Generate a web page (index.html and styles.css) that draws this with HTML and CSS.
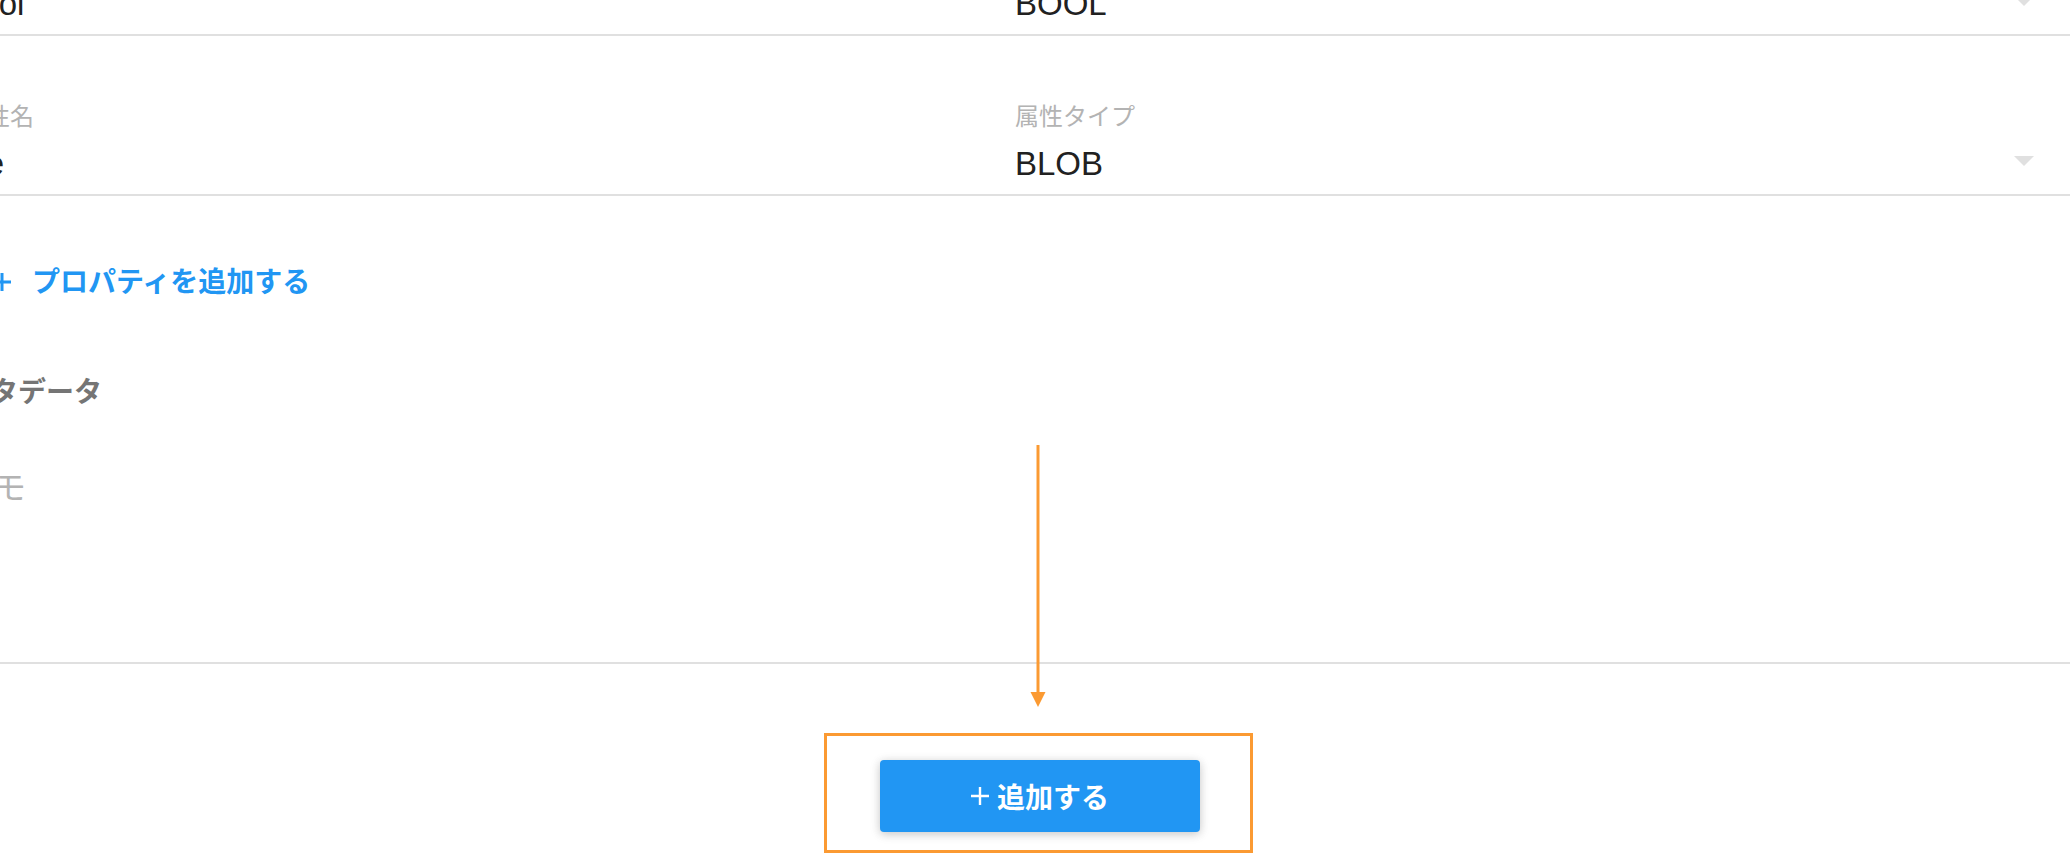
FILE: index.html
```html
<!DOCTYPE html>
<html lang="ja">
<head>
<meta charset="utf-8">
<title>プロパティ編集</title>
<link rel="stylesheet" href="styles.css">
</head>
<body>
<div class="page">
  <div class="form">
    <div class="prop-row">
      <div class="field">
        <div class="field-label">属性名</div>
        <div class="field-value">bool</div>
      </div>
      <div class="field">
        <div class="field-label">属性タイプ</div>
        <div class="field-value">
          <span>BOOL</span>
          <svg class="caret" width="20" height="10" viewBox="0 0 20 10"><path d="M0 0h20L10 10z"/></svg>
        </div>
      </div>
    </div>
    <div class="prop-row">
      <div class="field">
        <div class="field-label">属性名</div>
        <div class="field-value">file</div>
      </div>
      <div class="field">
        <div class="field-label">属性タイプ</div>
        <div class="field-value">
          <span>BLOB</span>
          <svg class="caret" width="20" height="10" viewBox="0 0 20 10"><path d="M0 0h20L10 10z"/></svg>
        </div>
      </div>
    </div>
    <button class="add-prop" type="button">
      <svg class="add-prop-icon" width="20" height="20" viewBox="0 0 20 20"><path d="M10 1v18M1 10h18"/></svg>
      <span class="add-prop-text">プロパティを追加する</span>
    </button>
    <h3 class="section-title">メタデータ</h3>
    <div class="memo">
      <div class="memo-label">メモ</div>
    </div>
  </div>
  <div class="actions">
    <button class="submit" type="button">
      <svg class="submit-icon" width="18" height="18" viewBox="0 0 18 18"><path d="M9 0v18M0 9h18"/></svg>
      <span>追加する</span>
    </button>
  </div>
  <svg class="annot-arrow" width="16" height="262" viewBox="0 0 16 262">
    <path class="annot-line" d="M8 0V248"/>
    <path class="annot-head" d="M0.5 247H15.5L8 262z"/>
  </svg>
  <div class="annot-box"></div>
</div>
</body>
</html>
```

FILE: styles.css
```css
html, body {
  margin: 0;
  padding: 0;
  background: #ffffff;
}

body {
  font-family: "Liberation Sans", "Noto Sans CJK JP", sans-serif;
  overflow: hidden;
}

.page {
  position: relative;
  width: 2070px;
  height: 864px;
  overflow: hidden;
}

.form {
  margin-top: -124px;
  margin-left: -38px;
  width: 2108px;
}

.prop-row {
  display: grid;
  grid-template-columns: 1053px 1fr;
}

.field {
  display: flex;
  flex-direction: column;
  height: 160px;
  padding-top: 67px;
  box-sizing: border-box;
  border-bottom: 2px solid #e0e0e0;
}

.field-label {
  font-family: "Noto Sans CJK JP", sans-serif;
  font-size: 24px;
  line-height: 24px;
  color: #b3b3b3;
  white-space: nowrap;
}

.field-value {
  margin-top: 20px;
  display: flex;
  align-items: center;
  justify-content: space-between;
  font-size: 33px;
  line-height: 33px;
  color: #212121;
  white-space: nowrap;
}

.caret {
  fill: #e0e0e0;
  margin-right: 36px;
  margin-bottom: 5px;
  flex: none;
}

.add-prop {
  display: flex;
  align-items: center;
  height: 72px;
  margin: 48px 0 0 0;
  padding: 0;
  border: 0;
  background: none;
  font-family: "Noto Sans CJK JP", sans-serif;
  font-weight: 700;
  font-size: 28px;
  line-height: 28px;
  color: #2196f3;
}

.add-prop-icon {
  margin-left: 30px;
  margin-top: 4px;
  stroke: #2196f3;
  stroke-width: 3;
  fill: none;
  flex: none;
}

.add-prop-text {
  margin-left: 20px;
}

.section-title {
  margin: 60px 0 0 0;
  font-family: "Noto Sans CJK JP", sans-serif;
  font-weight: 700;
  font-size: 28px;
  line-height: 28px;
  color: #757575;
}

.memo {
  height: 260px;
  padding-top: 65px;
  box-sizing: border-box;
  border-bottom: 2px solid #e0e0e0;
}

.memo-label {
  font-family: "Noto Sans CJK JP", sans-serif;
  font-size: 32px;
  line-height: 32px;
  color: #b3b3b3;
}

.actions {
  display: flex;
  justify-content: center;
  margin-top: 96px;
  padding-left: 10px;
}

.submit {
  display: flex;
  align-items: center;
  justify-content: center;
  gap: 8px;
  width: 320px;
  height: 72px;
  padding: 0;
  border: 0;
  border-radius: 4px;
  background: #2196f3;
  color: #ffffff;
  font-family: "Noto Sans CJK JP", sans-serif;
  font-weight: 700;
  font-size: 28px;
  line-height: 28px;
  box-shadow: 0 2px 12px rgba(0, 0, 0, 0.12), 0 2px 8px rgba(0, 0, 0, 0.12);
}

.submit-icon {
  stroke: #ffffff;
  stroke-width: 2.4;
  fill: none;
  flex: none;
}

.annot-arrow {
  position: absolute;
  left: 1030px;
  top: 445px;
}

.annot-line {
  stroke: #fb9a32;
  stroke-width: 3;
  fill: none;
}

.annot-head {
  fill: #fb9a32;
}

.annot-box {
  position: absolute;
  left: 824px;
  top: 733px;
  width: 429px;
  height: 120px;
  box-sizing: border-box;
  border: 3px solid #fb9a32;
}
```
